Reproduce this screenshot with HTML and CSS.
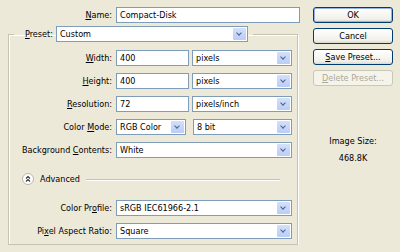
FILE: index.html
```html
<!DOCTYPE html>
<html lang="en">
<head>
    <meta charset="UTF-8">
    <title>New</title>
    <link rel="stylesheet" href="styles.css">
</head>
<body>
    <div class="dialog">
        <div class="main">
            <div class="name-row">
                <label class="label"><u>N</u>ame:</label>
                <div class="field">Compact-Disk</div>
            </div>

            <fieldset class="group">
                <legend class="preset">
                    <label class="label"><u>P</u>reset:</label>
                    <div class="combo preset-combo"><span class="value">Custom</span><span class="arrow"></span></div>
                </legend>

                <div class="rows">
                    <label class="label"><u>W</u>idth:</label>
                    <div class="pair">
                        <div class="field short">400</div>
                        <div class="combo unit"><span class="value">pixels</span><span class="arrow"></span></div>
                    </div>

                    <label class="label"><u>H</u>eight:</label>
                    <div class="pair">
                        <div class="field short">400</div>
                        <div class="combo unit"><span class="value">pixels</span><span class="arrow"></span></div>
                    </div>

                    <label class="label"><u>R</u>esolution:</label>
                    <div class="pair">
                        <div class="field short">72</div>
                        <div class="combo unit"><span class="value">pixels/inch</span><span class="arrow"></span></div>
                    </div>

                    <label class="label">Color <u>M</u>ode:</label>
                    <div class="pair mode">
                        <div class="combo mode-combo"><span class="value">RGB Color</span><span class="arrow"></span></div>
                        <div class="combo bits"><span class="value">8 bit</span><span class="arrow"></span></div>
                    </div>

                    <label class="label">Background <u>C</u>ontents:</label>
                    <div class="combo"><span class="value">White</span><span class="arrow"></span></div>
                </div>

                <div class="advanced">
                    <span class="toggle">
                        <svg width="12" height="12" viewBox="0 0 12 12">
                            <circle cx="6" cy="6" r="5.5" fill="#fff" stroke="#b9b6a6"/>
                            <path d="M4 5.5 L6 3.5 L8 5.5 M4 8.5 L6 6.5 L8 8.5" fill="none" stroke="#2b2b2b" stroke-width="1.1"/>
                        </svg>
                    </span>
                    <span>Advanced</span>
                    <span class="rule"></span>
                </div>

                <div class="rows">
                    <label class="label">Color Pr<u>o</u>file:</label>
                    <div class="combo"><span class="value">sRGB IEC61966-2.1</span><span class="arrow"></span></div>

                    <label class="label">Pi<u>x</u>el Aspect Ratio:</label>
                    <div class="combo"><span class="value">Square</span><span class="arrow"></span></div>
                </div>
            </fieldset>
        </div>

        <div class="side">
            <button class="btn default">OK</button>
            <button class="btn">Cancel</button>
            <button class="btn"><u>S</u>ave Preset...</button>
            <button class="btn" disabled><u>D</u>elete Preset...</button>

            <div class="size">
                <div>Image Size:</div>
                <div>468.8K</div>
            </div>
        </div>
    </div>
</body>
</html>
```

FILE: styles.css
```css
body {
    margin: 0;
    background-color: #ece9d8;
    font-family: "DejaVu Sans Condensed", "DejaVu Sans", sans-serif;
    font-stretch: condensed;
    font-size: 9px;
    color: #000;
}

.dialog {
    display: flex;
    padding: 7px 0 0 8px;
}

.main {
    width: 292px;
}

.label {
    text-align: right;
    white-space: nowrap;
}

.name-row {
    display: grid;
    grid-template-columns: 104px 184px;
    column-gap: 4px;
    align-items: center;
}

.field,
.combo {
    box-sizing: border-box;
    height: 16px;
    border: 1px solid #7f9db9;
    background-color: #fff;
    display: flex;
    align-items: center;
    padding-left: 3px;
    white-space: nowrap;
    overflow: hidden;
}

.combo .value {
    flex: 1;
}

.combo .arrow {
    width: 13px;
    height: 12px;
    margin-right: 1px;
    border-radius: 1px;
    background: linear-gradient(#d4e0fb, #b9cdf7);
    position: relative;
}

.combo .arrow::after {
    content: "";
    position: absolute;
    left: 4px;
    top: 3px;
    width: 3px;
    height: 3px;
    border-right: 1.5px solid #4d6185;
    border-bottom: 1.5px solid #4d6185;
    transform: rotate(45deg);
}

.group {
    margin: 3px 2px 0 0;
    padding: 8px 5px 5px 0;
    border: 1px solid #c6c3b2;
    box-shadow: 1px 1px 0 #fff, inset 1px 1px 0 #fff;
    min-width: 0;
}

.preset {
    display: flex;
    align-items: center;
    gap: 3px;
    margin-left: 5px;
    padding: 0 5px 0 11px;
}

.preset-combo {
    width: 192px;
}

.rows {
    display: grid;
    grid-template-columns: 103px 176px;
    column-gap: 4px;
    row-gap: 7px;
    align-items: center;
}

.pair {
    display: flex;
    gap: 3px;
}

.short {
    width: 73px;
}

.unit {
    width: 100px;
}

.mode {
    gap: 7px;
}

.mode-combo {
    width: 70px;
}

.bits {
    width: 99px;
}

.advanced {
    display: flex;
    align-items: center;
    gap: 6px;
    height: 12px;
    margin: 15px 12px 15px 13px;
}

.toggle {
    display: flex;
}

.rule {
    flex: 1;
    height: 1px;
    margin-left: 0;
    background-color: #c6c3b2;
    box-shadow: 0 1px 0 #fff;
}

.side {
    width: 80px;
    margin-left: 13px;
    display: flex;
    flex-direction: column;
    gap: 5px;
}

.btn {
    height: 16px;
    padding: 0;
    border: 1px solid #003c74;
    border-radius: 3px;
    background: linear-gradient(#ffffff, #f1f0ea 80%, #dcd8cc);
    font-family: inherit;
    font-stretch: inherit;
    font-size: 9px;
    color: #000;
}

.btn.default {
    box-shadow: inset 0 0 0 1px #98b4e6;
}

.btn:disabled {
    border-color: #c9c7ba;
    background: #f5f4ea;
    color: #aca899;
}

.size {
    margin-top: 45px;
    display: flex;
    flex-direction: column;
    align-items: center;
    gap: 7px;
}
```
